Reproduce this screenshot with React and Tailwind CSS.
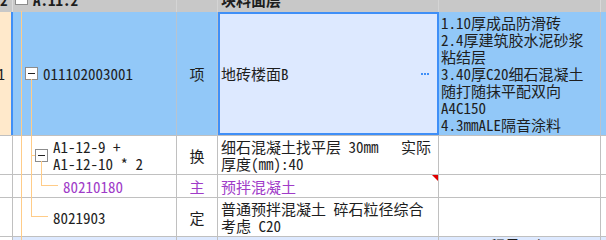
const font = "font-['Noto_Sans_Mono_CJK_SC','Noto_Sans_CJK_SC',monospace]";

function MinusBox() {
  return (
    <span className="flex h-[13px] w-[13px] shrink-0 items-center justify-center border border-[#8c8c8c] bg-white">
      <span className="h-px w-[7px] bg-[#222]" />
    </span>
  );
}

function VLine({ left, top = 0, bottom }) {
  return <span className="absolute w-px bg-[#ffcc88]" style={{ left, top, bottom: bottom ?? -1, height: bottom === undefined ? undefined : undefined }} />;
}

function HLine({ left, width, top }) {
  return <span className="absolute h-px bg-[#ffcc88]" style={{ left, width, top }} />;
}

const spec = [
  "1.10厚成品防滑砖",
  "2.4厚建筑胶水泥砂浆",
  "粘结层",
  "3.40厚C20细石混凝土",
  "随打随抹平配双向",
  "A4C150",
  "4.3mmALE隔音涂料",
];

export default function App() {
  return (
    <div className={`h-[240px] w-[606px] overflow-hidden bg-white text-[15px] leading-[17px] text-[#1e1e1e] ${font}`}>
      {/* group header, scrolled so only its lower part shows */}
      <div className="flex h-[12px] overflow-hidden bg-[#c8c8c8] font-bold">
        <div className="w-[13px] shrink-0 border-r border-[#dcdcdc]">
          <div className="-mt-[9px]">2</div>
        </div>
        <div className="relative flex w-[164px] shrink-0 items-start border-r border-[#d4d4d4]">
          <span className="-mt-[8px] ml-[2px] h-[13px] w-[13px] border border-[#8c8c8c] bg-white" />
          <span className="-mt-[9px] ml-[5px] whitespace-nowrap">A.11.2</span>
        </div>
        <div className="w-[41px] shrink-0 border-r border-[#d4d4d4]" />
        <div className="w-[221px] shrink-0 border-r border-[#d4d4d4] pl-[3px]">
          <div className="-mt-[9px] whitespace-nowrap">块料面层</div>
        </div>
        <div className="w-[162px] shrink-0 border-r border-[#d8d8d8]" />
        <div className="flex-1" />
      </div>

      {/* selected row */}
      <div className="flex h-[124px] border-b border-[#c0c0c0] bg-[#92c8f8]">
        <div className="flex w-[13px] shrink-0 items-center justify-end overflow-hidden border-r-2 border-[#3f8ff7] bg-[#ffe9cb] pr-[6px]">
          <span>1</span>
        </div>
        <div className="relative flex w-[164px] shrink-0 items-center border-r border-[#b8c4d0] pl-[12px]">
          <VLine left={8} top={-1} />
          <VLine left={18} top={67} />
          <MinusBox />
          <span className="ml-[5px]">011102003001</span>
        </div>
        <div className="flex w-[41px] shrink-0 items-center justify-center border-r border-[#b8c4d0]">项</div>
        <div className="flex w-[221px] shrink-0 items-center justify-between border-2 border-[#3f8ff7] bg-[#dde9ff] pl-px pr-[8px]">
          <span>地砖楼面B</span>
          <span className="flex gap-px">
            <span className="h-[2px] w-[2px] bg-[#3f8ff7]" />
            <span className="h-[2px] w-[2px] bg-[#3f8ff7]" />
            <span className="h-[2px] w-[2px] bg-[#3f8ff7]" />
          </span>
        </div>
        <div className="flex w-[162px] shrink-0 flex-col justify-center border-r border-[#b8c4d0] pl-[2px]">
          {spec.map((s) => (
            <div key={s} className="whitespace-nowrap">{s}</div>
          ))}
        </div>
        <div className="flex-1" />
      </div>

      {/* 换 */}
      <div className="flex h-[39px] border-b border-[#c0c0c0]">
        <div className="w-[13px] shrink-0 border-r border-[#c0c0c0]" />
        <div className="relative flex w-[164px] shrink-0 items-center border-r border-[#c0c0c0] pl-[22px]">
          <VLine left={8} top={-1} />
          <VLine left={18} top={-1} />
          <HLine left={18} width={4} top={19} />
          <VLine left={28} top={25} />
          <MinusBox />
          <div className="ml-[5px] whitespace-pre">
            <div>A1-12-9 +</div>
            <div>A1-12-10 * 2</div>
          </div>
        </div>
        <div className="flex w-[41px] shrink-0 items-center justify-center border-r border-[#c0c0c0]">换</div>
        <div className="flex w-[221px] shrink-0 flex-col justify-center border-r border-[#c0c0c0] pl-[3px] whitespace-pre">
          <div>细石混凝土找平层 30mm   实际</div>
          <div>厚度(mm):40</div>
        </div>
        <div className="w-[162px] shrink-0 border-r border-[#c0c0c0]" />
        <div className="flex-1" />
      </div>

      {/* 主 */}
      <div className="flex h-[23px] border-b border-[#c0c0c0] text-[#a03cc8]">
        <div className="w-[13px] shrink-0 border-r border-[#c0c0c0]" />
        <div className="relative flex w-[164px] shrink-0 items-center border-r border-[#c0c0c0] pl-[50px]">
          <VLine left={8} top={-1} />
          <VLine left={18} top={-1} />
          <span className="absolute w-px bg-[#ffcc88]" style={{ left: 28, top: -1, height: 12 }} />
          <HLine left={28} width={17} top={10} />
          <span>80210180</span>
        </div>
        <div className="flex w-[41px] shrink-0 items-center justify-center border-r border-[#c0c0c0]">主</div>
        <div className="relative flex w-[221px] shrink-0 items-center border-r border-[#c0c0c0] pl-[3px]">
          <span>预拌混凝土</span>
          <svg className="absolute right-0 top-0" width="6" height="6" viewBox="0 0 6 6">
            <polygon points="0,0 6,0 6,6" fill="#e00000" />
          </svg>
        </div>
        <div className="w-[162px] shrink-0 border-r border-[#c0c0c0]" />
        <div className="flex-1" />
      </div>

      {/* 定 */}
      <div className="flex h-[39px] border-b border-[#c0c0c0]">
        <div className="w-[13px] shrink-0 border-r border-[#c0c0c0]" />
        <div className="relative flex w-[164px] shrink-0 items-center border-r border-[#c0c0c0] pl-[40px]">
          <VLine left={8} top={-1} />
          <span className="absolute w-px bg-[#ffcc88]" style={{ left: 18, top: -1, height: 20 }} />
          <HLine left={18} width={17} top={18} />
          <span>8021903</span>
        </div>
        <div className="flex w-[41px] shrink-0 items-center justify-center border-r border-[#c0c0c0]">定</div>
        <div className="flex w-[221px] shrink-0 flex-col justify-center border-r border-[#c0c0c0] pl-[3px] whitespace-pre">
          <div>普通预拌混凝土 碎石粒径综合</div>
          <div>考虑 C20</div>
        </div>
        <div className="w-[162px] shrink-0 border-r border-[#c0c0c0]" />
        <div className="flex-1" />
      </div>

      {/* next row, mostly below the fold */}
      <div className="flex h-[20px]">
        <div className="w-[13px] shrink-0 border-r border-[#c0c0c0]" />
        <div className="relative w-[164px] shrink-0 border-r border-[#c0c0c0] bg-[#dde9ff]">
          <VLine left={8} top={-1} />
        </div>
        <div className="w-[41px] shrink-0 border-r border-[#c0c0c0] bg-[#dde9ff]" />
        <div className="w-[221px] shrink-0 border-r border-[#c0c0c0] bg-[#dde9ff]" />
        <div className="w-[162px] shrink-0 border-r border-[#c0c0c0] bg-[#dde9ff] pl-[36px] font-bold whitespace-nowrap">工程量明细</div>
        <div className="flex-1 bg-[#dde9ff]" />
      </div>
    </div>
  );
}
